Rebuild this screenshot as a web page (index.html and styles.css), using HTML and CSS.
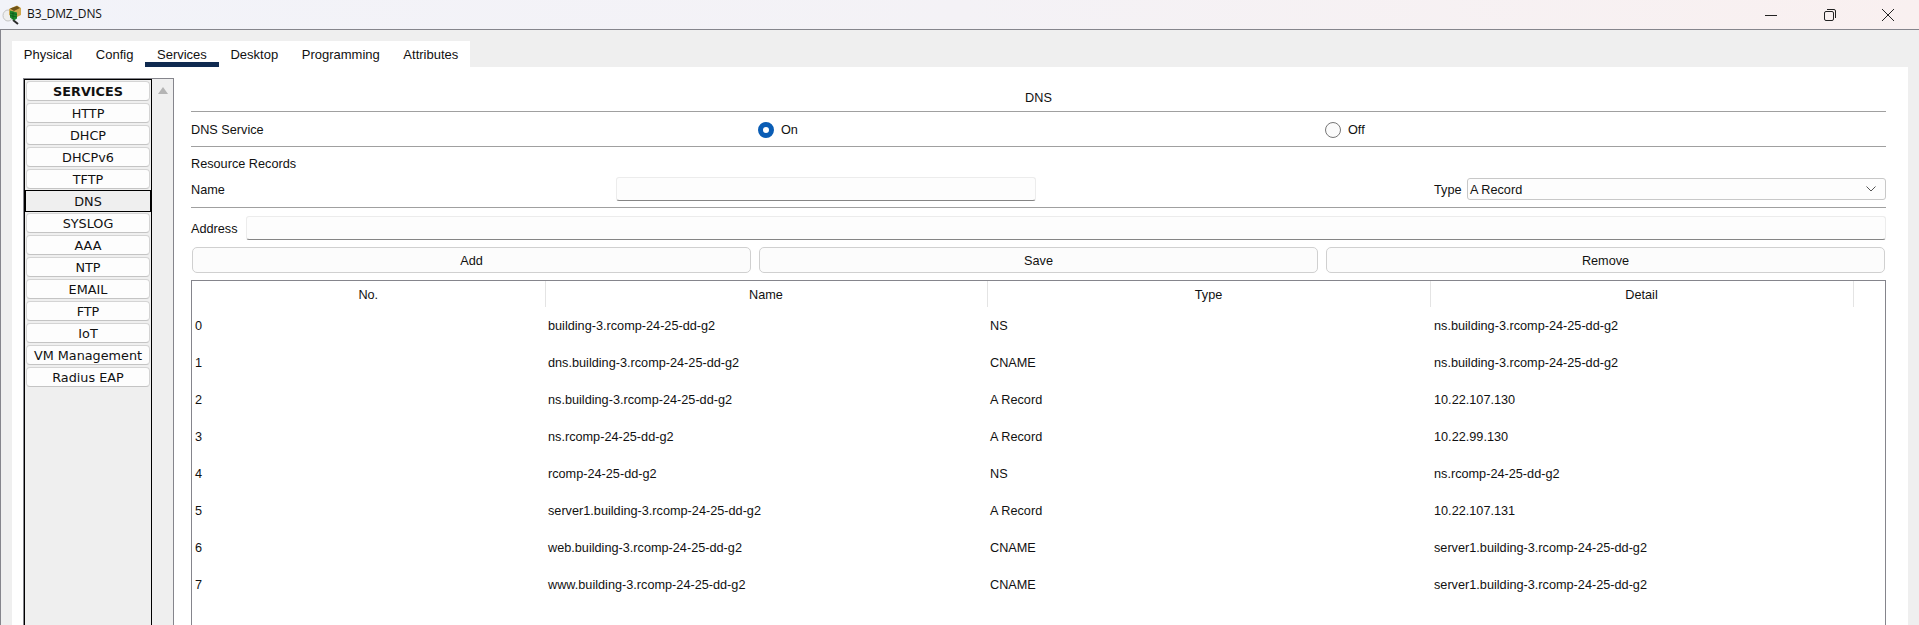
FILE: index.html
```html
<!DOCTYPE html>
<html lang="en">
<head>
    <meta charset="UTF-8">
    <title>B3_DMZ_DNS</title>
    <link rel="stylesheet" href="styles.css">
</head>
<body>
    <div class="titlebar">
        <svg class="app-icon" width="20" height="20" viewBox="0 0 20 20">
            <ellipse cx="6" cy="10.500" rx="5" ry="5.500" fill="#eeeeee" stroke="#c4c4c4"/>
            <path d="M11 15l5 4" stroke="#2a2a2a" stroke-width="2"/>
            <path d="M7 4l8-3.500 4 2.500v7l-6 3-6-3z" fill="#d0a850"/>
            <path d="M8 3.500l7-2.500 3 2-6 3z" fill="#6e5218"/>
            <path d="M8 5.500l7 2v6l-3 2-4-3z" fill="#1f8a2c"/>
            <path d="M8 8l7 1.500M8 10.500l7 1.500M11 6.500v8" stroke="#0b4a12" stroke-width=".6"/>
        </svg>
        <span class="title-text">B3_DMZ_DNS</span>
        <div class="win-controls">
            <svg width="14" height="14" viewBox="0 0 14 14"><path d="M1 7.500h12" stroke="#222" fill="none"/></svg>
            <svg width="14" height="14" viewBox="0 0 14 14"><rect x="1.500" y="3.500" width="9" height="9" rx="1.500" stroke="#222" fill="none"/><path d="M4 1.500h7a1.500 1.500 0 0 1 1.500 1.500v7" stroke="#222" fill="none"/></svg>
            <svg width="14" height="14" viewBox="0 0 14 14"><path d="M1 1l12 12M13 1L1 13" stroke="#222" fill="none"/></svg>
        </div>
    </div>

    <div class="window">
        <div class="tabs">
            <div class="tab">Physical</div>
            <div class="tab">Config</div>
            <div class="tab active">Services</div>
            <div class="tab">Desktop</div>
            <div class="tab">Programming</div>
            <div class="tab">Attributes</div>
        </div>

        <div class="panel">
            <div class="side">
                <div class="service-list">
                    <div class="service head">SERVICES</div>
                    <div class="service">HTTP</div>
                    <div class="service">DHCP</div>
                    <div class="service">DHCPv6</div>
                    <div class="service">TFTP</div>
                    <div class="service selected">DNS</div>
                    <div class="service">SYSLOG</div>
                    <div class="service">AAA</div>
                    <div class="service">NTP</div>
                    <div class="service">EMAIL</div>
                    <div class="service">FTP</div>
                    <div class="service">IoT</div>
                    <div class="service">VM Management</div>
                    <div class="service">Radius EAP</div>
                </div>
                <div class="scroll"><div class="arrow-up"></div></div>
            </div>

            <div class="main">
                <div class="heading">DNS</div>
                <div class="service-row">
                    <span>DNS Service</span>
                    <label class="radio-item"><span class="radio on"></span>On</label>
                    <label class="radio-item"><span class="radio"></span>Off</label>
                </div>
                <div class="records">
                    <div class="records-label">Resource Records</div>
                    <div class="name-row">
                        <span class="name-label">Name</span>
                        <div class="input name-input"></div>
                        <span class="type-label">Type</span>
                        <div class="select">
                            <span class="select-value">A Record</span>
                            <svg width="10" height="6" viewBox="0 0 10 6"><path d="M.5.5L5 5 9.500.5" stroke="#555" fill="none"/></svg>
                        </div>
                    </div>
                </div>
                <div class="address-row">
                    <span class="address-label">Address</span>
                    <div class="input address-input"></div>
                </div>
                <div class="buttons">
                    <div class="btn">Add</div>
                    <div class="btn">Save</div>
                    <div class="btn">Remove</div>
                </div>
                <div class="table-box">
                    <table>
                        <colgroup>
                            <col class="c-no"><col class="c-name"><col class="c-type"><col class="c-detail"><col>
                        </colgroup>
                        <thead>
                            <tr><th>No.</th><th>Name</th><th>Type</th><th>Detail</th><th></th></tr>
                        </thead>
                        <tbody>
                            <tr><td>0</td><td>building-3.rcomp-24-25-dd-g2</td><td>NS</td><td>ns.building-3.rcomp-24-25-dd-g2</td><td></td></tr>
                            <tr><td>1</td><td>dns.building-3.rcomp-24-25-dd-g2</td><td>CNAME</td><td>ns.building-3.rcomp-24-25-dd-g2</td><td></td></tr>
                            <tr><td>2</td><td>ns.building-3.rcomp-24-25-dd-g2</td><td>A Record</td><td>10.22.107.130</td><td></td></tr>
                            <tr><td>3</td><td>ns.rcomp-24-25-dd-g2</td><td>A Record</td><td>10.22.99.130</td><td></td></tr>
                            <tr><td>4</td><td>rcomp-24-25-dd-g2</td><td>NS</td><td>ns.rcomp-24-25-dd-g2</td><td></td></tr>
                            <tr><td>5</td><td>server1.building-3.rcomp-24-25-dd-g2</td><td>A Record</td><td>10.22.107.131</td><td></td></tr>
                            <tr><td>6</td><td>web.building-3.rcomp-24-25-dd-g2</td><td>CNAME</td><td>server1.building-3.rcomp-24-25-dd-g2</td><td></td></tr>
                            <tr><td>7</td><td>www.building-3.rcomp-24-25-dd-g2</td><td>CNAME</td><td>server1.building-3.rcomp-24-25-dd-g2</td><td></td></tr>
                        </tbody>
                    </table>
                </div>
            </div>
        </div>
    </div>
</body>
</html>
```

FILE: styles.css
```css
html, body {
    margin: 0;
    padding: 0;
    height: 625px;
    overflow: hidden;
}
body {
    display: flex;
    flex-direction: column;
    font-family: "Liberation Sans", Arial, sans-serif;
    font-size: 12.7px;
    color: #111;
    background-color: #efefef;
}

/* title bar */
.titlebar {
    flex: none;
    display: flex;
    align-items: center;
    height: 29px;
    border-bottom: 1px solid #85858c;
    background: linear-gradient(to right, #f2f3f9, #f4f2f6 50%, #f9f0f0);
}
.app-icon {
    margin-left: 2px;
}
.title-text {
    margin-left: 5px;
    font-family: "Open Sans", sans-serif;
    font-size: 12px;
    letter-spacing: -0.1px;
    line-height: 14px;
    padding-bottom: 2px;
}
.win-controls {
    margin-left: auto;
    display: flex;
    gap: 44.5px;
    margin-right: 24px;
}

/* window body */
.window {
    flex: 1;
    min-height: 0;
    display: flex;
    flex-direction: column;
    padding: 11px 11px 0 11px;
    border-left: 1px solid #85858c;
}
.tabs {
    flex: none;
    display: flex;
    align-self: flex-start;
    background-color: #fff;
    height: 26px;
}
.tab {
    padding: 0 11.8px;
    line-height: 28px;
    font-size: 13px;
    box-sizing: border-box;
}
.tab.active {
    border-bottom: 5px solid #0f2a50;
}
.panel {
    flex: 1;
    min-height: 0;
    display: flex;
    padding: 11px 22px 0 11px;
    background-color: #fff;
}

/* services list */
.side {
    flex: none;
    display: flex;
    width: 149px;
    border: 1px solid #85858c;
    border-bottom: none;
    background-color: #efefef;
}
.service-list {
    flex: none;
    width: 126px;
    padding: 1px 0 0 0;
    border: 1px solid #000;
    border-bottom: none;
    font-family: "DejaVu Sans", Verdana, sans-serif;
    font-size: 12.8px;
}
.service {
    box-sizing: border-box;
    height: 20px;
    margin: 0 1px 2px 1px;
    border: 1px solid #d4d4d4;
    border-bottom-color: #c4c4c4;
    border-radius: 4px;
    background-color: #fdfdfd;
    line-height: 19px;
    text-align: center;
    white-space: nowrap;
}
.service.head {
    font-weight: bold;
}
.service.selected {
    height: 22px;
    margin: -1px 0 1px 0;
    border: 1px solid #000;
    border-radius: 0;
    background-color: #efefef;
    line-height: 22px;
}
.scroll {
    flex: 1;
    display: flex;
    justify-content: center;
    padding-top: 8px;
}
.arrow-up {
    width: 0;
    height: 0;
    border-left: 5px solid transparent;
    border-right: 5px solid transparent;
    border-bottom: 7px solid #b4b4b4;
}

/* DNS form */
.main {
    flex: 1;
    min-width: 0;
    display: flex;
    flex-direction: column;
    margin-left: 17px;
}
.heading {
    flex: none;
    height: 33px;
    line-height: 40px;
    text-align: center;
    border-bottom: 1px solid #a0a0a0;
}
.service-row {
    flex: none;
    display: grid;
    grid-template-columns: 567px 567px 1fr;
    align-items: center;
    height: 32px;
    padding-top: 2px;
    border-bottom: 1px solid #a0a0a0;
}
.radio-item {
    display: flex;
    align-items: center;
    gap: 7px;
}
.radio {
    box-sizing: border-box;
    width: 16px;
    height: 16px;
    border: 1px solid #777;
    border-radius: 50%;
    background-color: #fbfbfb;
}
.radio.on {
    border: 5px solid #0a5db5;
    background-color: #fff;
}
.records {
    flex: none;
    padding: 4px 0 6px 0;
    border-bottom: 1px solid #a0a0a0;
}
.records-label {
    line-height: 26px;
}
.name-row {
    display: flex;
    align-items: center;
    height: 24px;
}
.name-label {
    width: 425px;
    padding-top: 2px;
}
.input {
    box-sizing: border-box;
    height: 24px;
    border: 1px solid #ececec;
    border-bottom: 1px solid #858585;
    border-radius: 3px;
    background-color: #fdfdfd;
}
.name-input {
    width: 420px;
}
.type-label {
    margin-left: auto;
    width: 33px;
    padding-top: 2px;
}
.select {
    box-sizing: border-box;
    display: flex;
    align-items: center;
    justify-content: space-between;
    width: 419px;
    height: 22px;
    padding: 0 9px 0 2px;
    border: 1px solid #c8c8c8;
    border-radius: 3px;
    background-color: #fdfdfd;
}
.select-value {
    padding-top: 2px;
}
.address-row {
    flex: none;
    display: flex;
    align-items: center;
    margin-top: 8px;
}
.address-label {
    width: 55px;
    padding-top: 2px;
}
.address-input {
    flex: 1;
}
.buttons {
    flex: none;
    display: grid;
    grid-template-columns: 559px 559px 559px;
    gap: 8px;
    padding: 0 1px;
    margin-top: 7px;
}
.btn {
    box-sizing: border-box;
    height: 26px;
    line-height: 26px;
    text-align: center;
    border: 1px solid #d0d0d0;
    border-radius: 5px;
    background-color: #fcfcfc;
}

/* records table */
.table-box {
    flex: 1;
    margin-top: 7px;
    border: 1px solid #85858c;
    border-bottom: none;
    min-height: 0;
    overflow: hidden;
}
table {
    width: 100%;
    table-layout: fixed;
    border-collapse: collapse;
}
.c-no { width: 353px; }
.c-name { width: 442px; }
.c-type { width: 443px; }
.c-detail { width: 423px; }
th {
    box-sizing: border-box;
    height: 26px;
    padding: 2px 0 0 0;
    font-weight: normal;
    border-right: 1px solid #e4e4e4;
}
th:last-child {
    border-right: none;
}
td {
    height: 37px;
    padding: 0 0 0 3px;
    white-space: nowrap;
}
td:nth-child(4) {
    padding-left: 4px;
}
```
